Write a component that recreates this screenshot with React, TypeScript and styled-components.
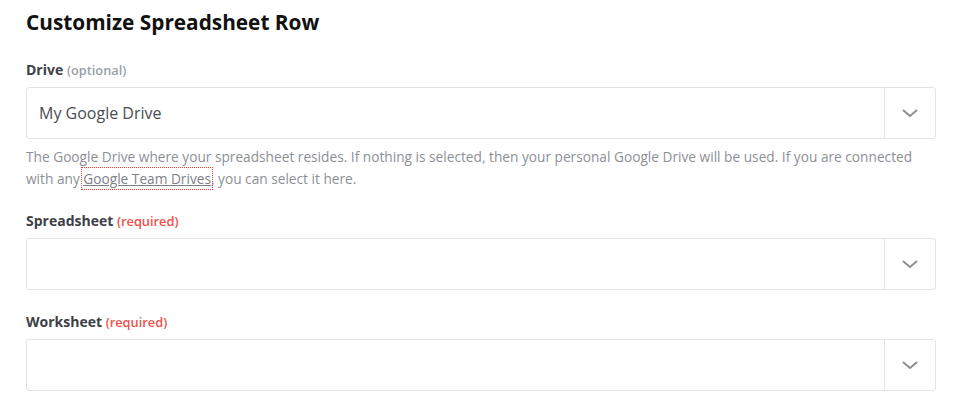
import styled, { createGlobalStyle } from 'styled-components';

const GlobalStyle = createGlobalStyle`
  body {
    margin: 0;
    background: #fff;
    font-family: 'Open Sans', 'Noto Sans', sans-serif;
  }
`;

const Page = styled.div`
  padding: 8px 38px 0 26px;
`;

const Title = styled.h2`
  margin: 0 0 25px;
  font-size: 20.8px;
  line-height: 28px;
  font-weight: 700;
  color: #111;
`;

const Field = styled.div`
  margin-bottom: 23px;
`;

const Label = styled.div`
  font-size: 14px;
  line-height: 18px;
  font-weight: 700;
  color: #3d4047;
  margin-bottom: 8px;
`;

const Hint = styled.span<{ $required?: boolean }>`
  font-size: 12.8px;
  font-weight: 600;
  color: ${(p) => (p.$required ? '#f0504a' : '#9aa0a6')};
`;

const Select = styled.div`
  display: flex;
  height: 50px;
  border: 1px solid #e1e4e8;
  border-radius: 3px;
  background: #fff;
`;

const Value = styled.div`
  flex: 1;
  display: flex;
  align-items: center;
  padding-left: 12px;
  font-size: 16px;
  color: #4a4d52;
`;

const Toggle = styled.div`
  width: 50px;
  border-left: 1px solid #e1e4e8;
  display: flex;
  align-items: center;
  justify-content: center;
`;

const Help = styled.p`
  margin: 7px 0 -1px;
  font-size: 13.7px;
  line-height: 22px;
  color: #8c9096;
`;

const Link = styled.a`
  color: #7d8187;
  text-decoration: underline;
  outline: 1px dotted #e0433b;
  outline-offset: 1px;
`;

const Chevron = () => (
  <svg width="16" height="9" viewBox="0 0 16 9">
    <path d="M1.5 1.5 L8 7 L14.5 1.5" fill="none" stroke="#8a8f95" strokeWidth="2" strokeLinecap="round" strokeLinejoin="round" />
  </svg>
);

const Dropdown = ({ value }: { value?: string }) => (
  <Select>
    <Value>{value}</Value>
    <Toggle>
      <Chevron />
    </Toggle>
  </Select>
);

export default function App() {
  return (
    <>
      <GlobalStyle />
      <Page>
        <Title>Customize Spreadsheet Row</Title>
        <Field>
          <Label>
            Drive <Hint>(optional)</Hint>
          </Label>
          <Dropdown value="My Google Drive" />
          <Help>
            The Google Drive where your spreadsheet resides. If nothing is selected, then your personal Google Drive
            will be used. If you are connected with any <Link>Google Team Drives</Link>, you can select it here.
          </Help>
        </Field>
        <Field>
          <Label>
            Spreadsheet <Hint $required>(required)</Hint>
          </Label>
          <Dropdown />
        </Field>
        <Field>
          <Label>
            Worksheet <Hint $required>(required)</Hint>
          </Label>
          <Dropdown />
        </Field>
      </Page>
    </>
  );
}
